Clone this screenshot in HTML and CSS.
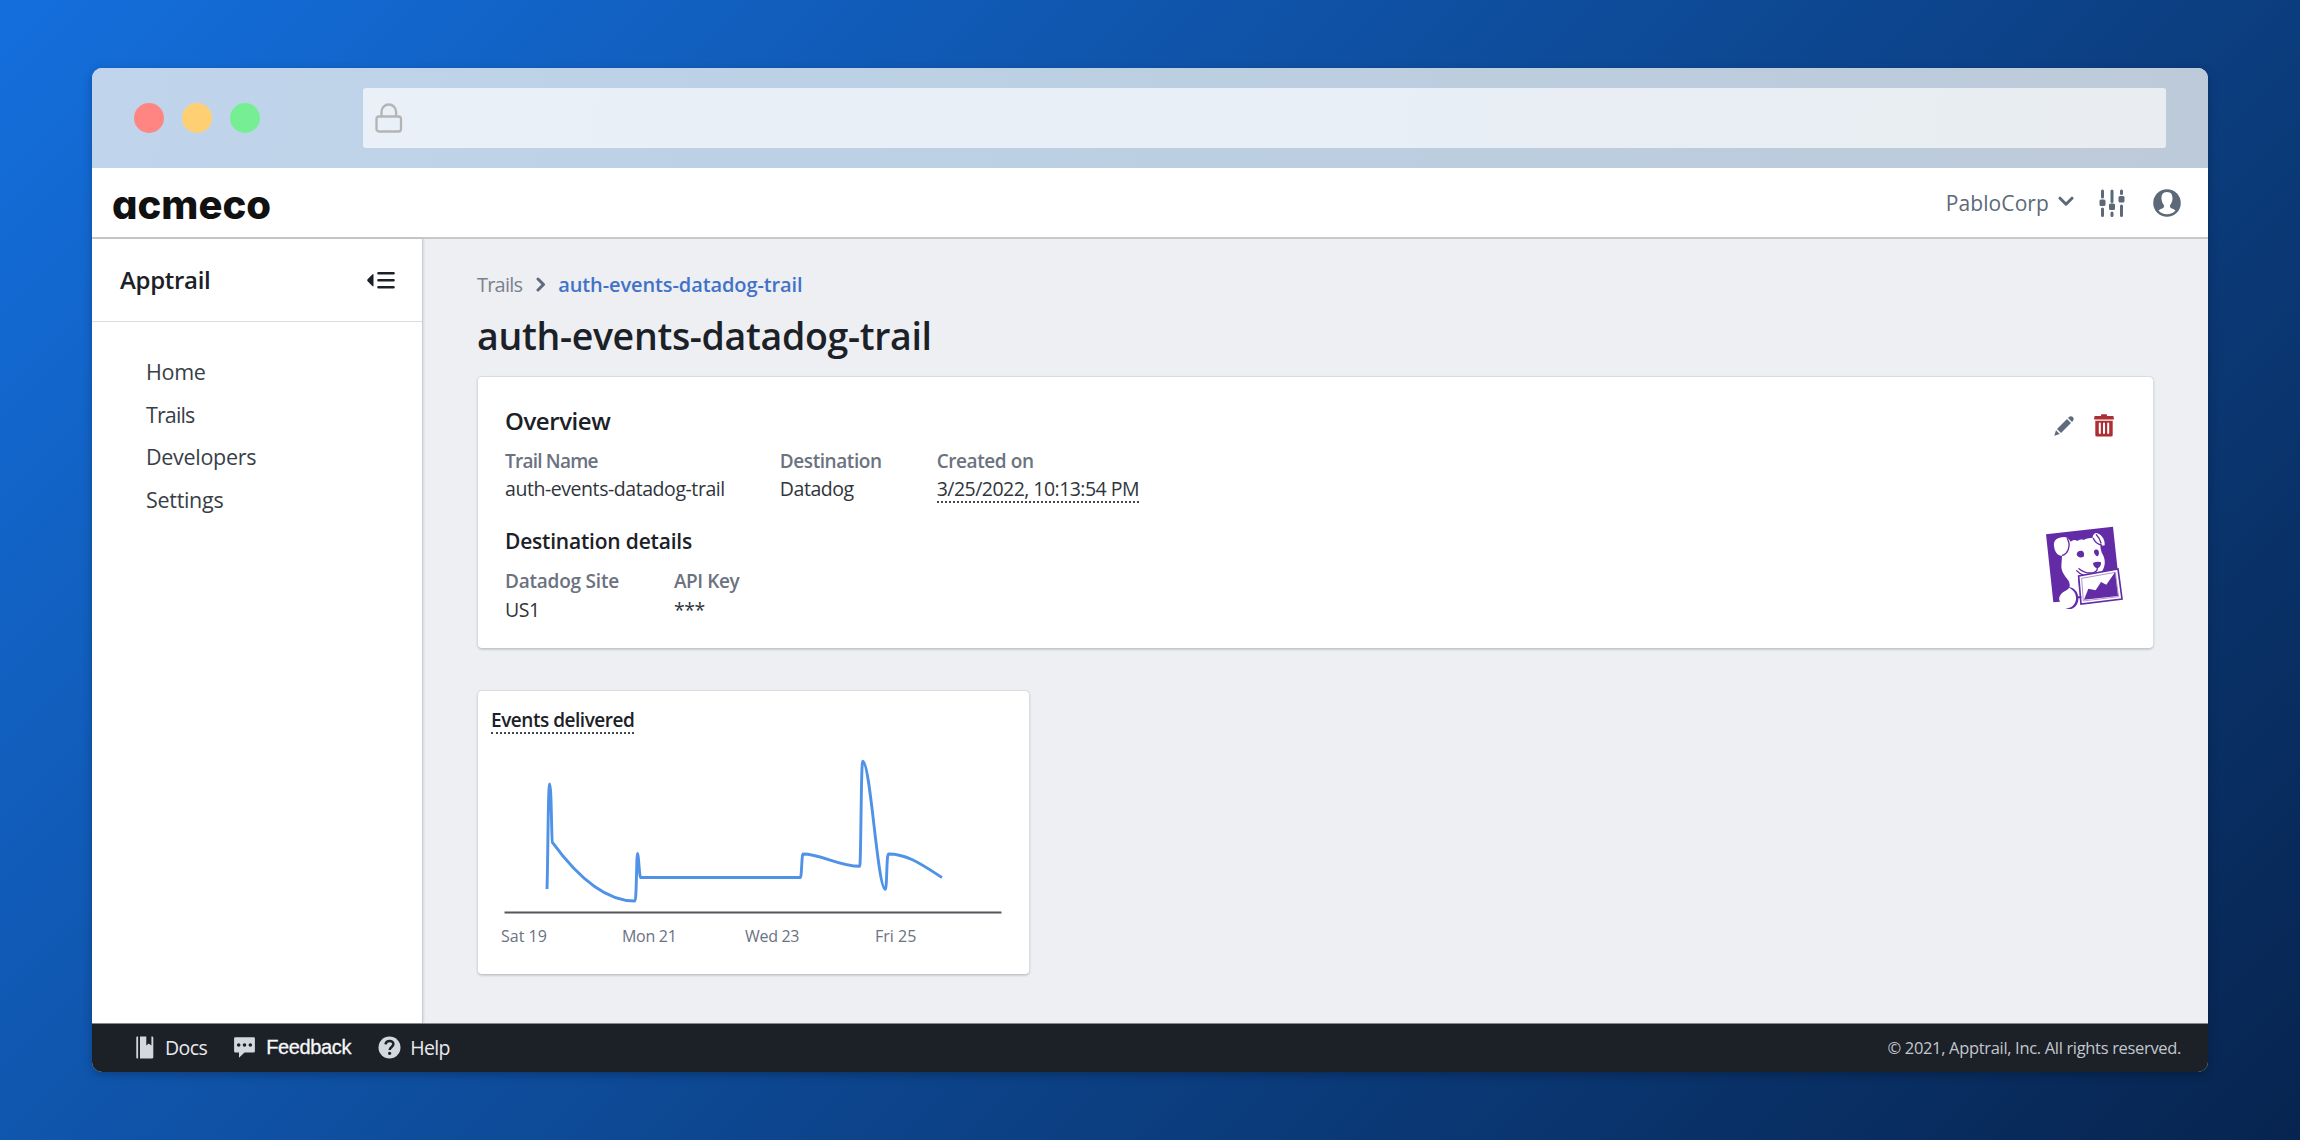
FILE: index.html
```html
<!DOCTYPE html>
<html lang="en">
<head>
<meta charset="utf-8">
<title>auth-events-datadog-trail</title>
<link rel="stylesheet" href="styles.css">
</head>
<body>
<div class="window">
  <div class="chrome">
    <div class="lights"><i class="light red"></i><i class="light amber"></i><i class="light green"></i></div>
    <div class="address">
      <svg class="lock" width="28" height="31" viewBox="0 0 28 31" fill="none" stroke="#b4b4b3" stroke-width="2.3"><rect x="1.5" y="13.500" width="24.5" height="15" rx="2.5"/><path d="M6.5 13.500V8.800a7.3 7.3 0 0 1 14.6 0V13.500"/></svg>
    </div>
  </div>

  <header class="topbar">
    <div class="logo">acmeco</div>
    <div class="account">
      <span class="org">PabloCorp</span>
      <svg class="chevron" width="16" height="11" viewBox="0 0 16 11" fill="none" stroke="#5d6978" stroke-width="3" stroke-linecap="round" stroke-linejoin="round"><path d="M2 2.2l6 6 6-6"/></svg>
      <svg class="sliders" width="26" height="28" viewBox="0 0 26 28" fill="none" stroke="#5d6978" stroke-width="3" stroke-linecap="round"><path d="M3.5 2v6M3.5 20v6.500M13 2v10.500M13 24v2.500M22.500 2v2.500M22.500 17v9.500"/><g fill="#5d6978" stroke="none"><rect x=".5" y="10.500" width="6" height="6.500" rx="1.500"/><rect x="10" y="14.500" width="6" height="6.500" rx="1.500"/><rect x="19.500" y="7" width="6" height="6.500" rx="1.500"/></g></svg>
      <svg class="user" width="28" height="28" viewBox="0 0 28 28"><circle cx="14" cy="14" r="13.800" fill="#5d6978"/><path fill="#fff" d="M14 3c4 0 5.700 2.800 5.500 6.500-.1 3-1.200 5-2.300 6.500-.7 1.200-.3 2.600 1 3.200 2 .9 3.300 1.300 4.300 2.300A11.400 11.400 0 0 1 14 25.300a11.400 11.400 0 0 1-8.500-3.800c1-1 2.300-1.400 4.300-2.300 1.300-.6 1.700-2 1-3.200C9.700 14.500 8.600 12.500 8.500 9.500 8.300 5.800 10 3 14 3z"/></svg>
    </div>
  </header>

  <div class="body">
    <aside class="sidebar">
      <div class="side-head">
        <span class="side-title">Apptrail</span>
        <svg width="28" height="19" viewBox="0 0 28 19"><path d="M.6 8.300L5.300 3.400q1.200-1 1.200.6v10.500q0 1.600-1.200.6L.6 10.200q-.8-.9 0-1.900z" fill="#1c2127"/><path d="M11.500 2.300h15M11.500 9.300h15M11.500 16.300h15" stroke="#1c2127" stroke-width="2.600" stroke-linecap="round"/></svg>
      </div>
      <nav class="nav"><a>Home</a><a class="snug">Trails</a><a>Developers</a><a>Settings</a></nav>
    </aside>

    <main class="content">
      <div class="crumbs">
        <span class="crumb">Trails</span>
        <svg width="10" height="15" viewBox="0 0 10 15" fill="none" stroke="#5f6b7c" stroke-width="3" stroke-linecap="round" stroke-linejoin="round"><path d="M2 2l5.500 5.500L2 13"/></svg>
        <span class="crumb current">auth-events-datadog-trail</span>
      </div>
      <h1>auth-events-datadog-trail</h1>

      <section class="card overview">
        <div class="details">
          <h2>Overview</h2>
          <dl class="fields">
            <div><dt class="snug">Trail Name</dt><dd>auth-events-datadog-trail</dd></div>
            <div><dt>Destination</dt><dd>Datadog</dd></div>
            <div><dt>Created on</dt><dd><span class="dotted">3/25/2022, 10:13:54 PM</span></dd></div>
          </dl>
          <h3>Destination details</h3>
          <dl class="fields">
            <div><dt class="loose">Datadog Site</dt><dd>US1</dd></div>
            <div><dt>API Key</dt><dd class="secret">***</dd></div>
          </dl>
        </div>
        <div class="side">
          <div class="actions">
            <svg width="20" height="20" viewBox="0 0 20 20" fill="#5f6b7c"><path d="M.3 19.700L2 14.200l3.800 3.800z"/><path d="M3 13L13 3l4 4L7 17z"/><path d="M14 2l1.200-1.200q2-1.400 3.600.3t.3 3.600L18 6z"/></svg>
            <svg width="20" height="23" viewBox="0 0 20 23"><path fill="#ac2f33" d="M7 2V1q0-.8.8-.8h4.400q.8 0 .8.8v1h5.500q1.300 0 1.300 1.300V5.500H.2V3.300Q.2 2 1.500 2z"/><path fill="#ac2f33" d="M1.300 6.800h17.400V21q0 1.600-1.600 1.600H2.900Q1.300 22.600 1.300 21z"/><path stroke="#fff" stroke-width="2" stroke-linecap="round" d="M5.800 9.500v9.500M10 9.500v9.500M14.200 9.500v9.500"/></svg>
          </div>
          <svg class="dog" width="77" height="84" viewBox="24 20 231 252">
            <path fill="#632ca6" d="M24 45L225 22l14 130-60 30-55 20-58 45-20 2z"/>
            <path fill="#fff" d="M48 80c-2-17 8-26 32-27 8 0 14 7 18 14 8-6 14-6 20-2 8-5 14-5 20-3 8-5 18-7 26-5-1-8 4-16 12-16 16 4 26 22 24 37-5 2-10 0-13-4 0 14 2 22 8 33 5 10 7 22 4 33-2 8-5 14-9 18l-70 12 8 89-60-9c-10-12-2-26 12-34 17-8 18-17 12-31-9-13-22-26-22-44l2-31c-14-1-22-13-24-30z"/>
            <path fill="none" stroke="#632ca6" stroke-width="4" stroke-linecap="round" d="M88 58c6 10 7 20 3 32-3 9-9 16-18 18M166 57c4 10 12 18 24 20M175 46c7 7 11 14 14 25"/>
            <path fill="#632ca6" d="M116 106c0-8 8-13 17-11 6 3 6 12 4 17-8 4-17 3-21-6zM168 95c4-6 12-6 14 1 2 6 0 13-3 15-6-1-12-9-11-16zM165 131c8-4 18-5 24-2 1 8-3 16-11 18-7-1-13-8-13-16z"/>
            <path fill="none" stroke="#632ca6" stroke-width="4" stroke-linecap="round" d="M178 147c0 7-4 11-13 13-16 3-30-2-42-12M116 154c12 15 34 20 54 14l14-9"/>
            <path fill="#fff" stroke="#632ca6" stroke-width="5" d="M122 170l118-21 12 90-123 15z"/>
            <path fill="none" stroke="#632ca6" stroke-width="1.500" d="M131 177l101-18 10 73-106 13z"/>
            <path fill="#632ca6" d="M138 241l13-33 22 5 16-25 16 8 26-37 9 71z"/>
            <path fill="#632ca6" d="M87 203c22 0 36 16 34 38-2 20-19 34-38 26 17 0 29-10 31-27 2-16-9-32-27-37zM118 231h12v6h-12z"/>
          </svg>
        </div>
      </section>

      <section class="card chart">
        <h4><span class="dotted">Events delivered</span></h4>
        <svg class="plot" width="520" height="210" viewBox="492 745 520 210">
          <path fill="none" stroke="#4f92e8" stroke-width="2.900" stroke-linejoin="round" d="M548 890C549 860 549 785 550.700 785S552.500 842 553.400 843.300C575 873 604 902 636 902C637.500 902 637.500 854.500 638.500 854.500S640.500 878.500 641.500 878.500H801.400C802.700 878.500 802.700 855 804 855C822 855 840 867.300 860.700 867.300C862 867.300 862 762.300 863.700 762.300C871.500 762.300 878.500 890.300 886.300 890.300C888 890.300 887.500 855 889.400 855C908 855 922 865 943 878.500"/>
          <path stroke="#55575c" stroke-width="1.800" d="M505.500 913.500h497"/>
          <g class="ticks"><text x="502" y="943">Sat 19</text><text class="tight" x="623" y="943">Mon 21</text><text class="tight" x="746" y="943">Wed 23</text><text x="876" y="943">Fri 25</text></g>
        </svg>
      </section>
    </main>
  </div>

  <footer class="footer">
    <a class="docs"><svg width="18" height="23" viewBox="0 0 18 23" fill="#d3d8de"><path d="M.3 1.500Q.3.600 1.200.6h.9v21.800h-.9q-.9 0-.9-.9zM4 .6h6.300v9l2.500-2 2.600 2v-9h.8q1.100 0 1.100 1.100v19.600q0 1.100-1.100 1.100H4z"/></svg>Docs</a>
    <a class="feedback"><svg width="21" height="21" viewBox="0 0 21 21"><path fill="#d3d8de" d="M1.300.3h18.400q1.200 0 1.200 1.200v12.800q0 1.200-1.200 1.200h-9.200L5 20.800v-5.300H1.300Q.1 15.500.1 14.300V1.500Q.1.300 1.300.3z"/><g fill="#1c2127"><circle cx="4.700" cy="8" r="1.800"/><circle cx="10.500" cy="8" r="1.800"/><circle cx="16.300" cy="8" r="1.800"/></g></svg>Feedback</a>
    <a class="help"><svg width="23" height="23" viewBox="0 0 23 23"><circle cx="11.500" cy="11.500" r="11" fill="#d3d8de"/><path d="M7.600 8.300c.3-4.400 7.900-4.300 7.800-.2 0 2.800-3.700 2.900-3.700 5.800" fill="none" stroke="#1c2127" stroke-width="2.500"/><circle cx="11.600" cy="17.300" r="1.600" fill="#1c2127"/></svg>Help</a>
    <span class="legal">© 2021, Apptrail, Inc. All rights reserved.</span>
  </footer>
</div>
</body>
</html>
```
FILE: styles.css
```css
* { box-sizing: border-box; }
html, body { height: 100%; }
body {
  margin: 0;
  padding: 68px 92px;
  overflow: hidden;
  background: linear-gradient(135deg, #146fdd 0%, #07244f 100%);
  font-family: "Open Sans", "Noto Sans", sans-serif;
  color: #1c2127;
}
svg { display: block; flex: none; }
h1, h2, h3, h4, dl, dd { margin: 0; font-weight: 600; }

.window {
  height: 1004px;
  display: flex;
  flex-direction: column;
  border-radius: 10px;
  overflow: hidden;
  background: #edeff3;
  box-shadow: 0 3px 10px rgba(0, 0, 0, .25);
}
.chrome {
  height: 100px;
  flex: none;
  display: flex;
  align-items: center;
  padding: 0 42px;
  background: linear-gradient(100deg, #c0d4eb, #bcd1e5 35%, #bccddd 70%, #bdcada);
}
.lights { display: flex; gap: 18px; margin-right: 103px; }
.light { width: 30px; height: 30px; border-radius: 50%; }
.red { background: #ff8583; }
.amber { background: #ffd073; }
.green { background: #76ef94; }
.address {
  flex: 1;
  height: 60px;
  display: flex;
  align-items: center;
  padding-left: 12px;
  border-radius: 3px;
  background: linear-gradient(100deg, #e9f0f8, #e8eef5 60%, #e9edf1);
}

.topbar {
  height: 71px;
  flex: none;
  display: flex;
  align-items: center;
  justify-content: space-between;
  padding: 0 27px 0 20px;
  background: #fff;
  border-bottom: 2px solid #c8c9ca;
}
.logo {
  font: 800 40px/60px Inter, sans-serif;
  font-feature-settings: "cv11";
  color: #111;
  padding-top: 4px;
}
.account { display: flex; align-items: center; color: #5d6978; }
.org { font-size: 21px; font-weight: 500; letter-spacing: .1px; }
.chevron { margin: -2px 25px 0 9px; }
.user { margin-left: 28px; }

.body { flex: 1; display: flex; min-height: 0; }
.sidebar {
  width: 331px;
  flex: none;
  background: #fff;
  border-right: 1px solid #c9ccd0;
  box-shadow: 1px 0 2px rgba(0, 0, 0, .1);
}
.side-head {
  height: 83px;
  display: flex;
  align-items: center;
  justify-content: space-between;
  padding: 0 27px 0 28px;
  border-bottom: 1px solid #dcdee0;
}
.side-title { font-size: 24px; font-weight: 600; letter-spacing: -.3px; margin-top: -1px; }
.nav {
  display: flex;
  flex-direction: column;
  padding: 29px 0 0 54px;
  font-size: 21.500px;
  line-height: 42.700px;
  letter-spacing: -.3px;
  color: #383e47;
}
.nav .snug { letter-spacing: -.9px; }

.content { flex: 1; padding: 30.500px 54.500px 0 54px; }
.crumbs { display: flex; align-items: center; height: 30px; font-size: 20px; }
.crumb { color: #7b818c; letter-spacing: -.8px; }
.crumbs svg { margin: 0 12px 0 14px; }
.crumb.current { color: #4272c8; font-weight: 600; letter-spacing: -.1px; }
h1 { margin: 11px 0 15px; font-size: 37.500px; line-height: 50px; letter-spacing: -.33px; }

.card {
  background: #fff;
  border: 1px solid #d9dbdf;
  border-bottom-color: #c3c6ca;
  border-radius: 5px;
  box-shadow: 0 1px 2px rgba(17, 20, 24, .15);
}
.overview {
  height: 273px;
  display: flex;
  justify-content: space-between;
  padding: 26px 30px 0 27px;
}
h2 { font-size: 24px; line-height: 36px; letter-spacing: -.43px; margin-bottom: 9px; }
h3 { font-size: 21px; line-height: 30px; letter-spacing: -.2px; margin: 23px 0 12px; }
.fields { display: flex; gap: 55px; line-height: 27.500px; }
dt { font-size: 19px; font-weight: 600; letter-spacing: -.42px; color: #6b7280; }
dt.snug { letter-spacing: -.77px; }
dt.loose { letter-spacing: -.22px; }
dd { font-size: 19.500px; font-weight: 400; letter-spacing: -.44px; color: #30353c; }
.dotted { display: inline-block; line-height: 24px; border-bottom: 2px dotted #404854; }
dd .dotted { letter-spacing: -.53px; }
.side { display: flex; flex-direction: column; align-items: flex-end; padding-top: 11.500px; }
.actions { display: flex; align-items: center; gap: 20px; margin: 0 9px 89px 0; }

.chart { width: 552.500px; height: 284.500px; margin-top: 41.500px; padding: 16px 0 0 13px; }
h4 { font-size: 19px; line-height: 26px; letter-spacing: -.47px; height: 27px; }
.plot { margin-top: 10px; }
.ticks { font-size: 16px; fill: #6b7280; }
.ticks .tight { letter-spacing: -.3px; }

.footer {
  height: 49px;
  flex: none;
  display: flex;
  align-items: center;
  gap: 27px;
  padding: 0 27px 2px 44px;
  background: #1c2127;
  border-top: 1px solid #84878b;
  color: #e9ebee;
  font-size: 19.500px;
  letter-spacing: -.6px;
}
.footer a { display: flex; align-items: center; }
.docs { gap: 11px; }
.feedback { gap: 11px; font: 20px "Liberation Sans", sans-serif; letter-spacing: -.35px; -webkit-text-stroke: .3px #f6f7f9; color: #f6f7f9; }
.help { gap: 9px; }
.legal { margin-left: auto; font-size: 16.500px; letter-spacing: -.33px; color: #c2c7cf; }
```
